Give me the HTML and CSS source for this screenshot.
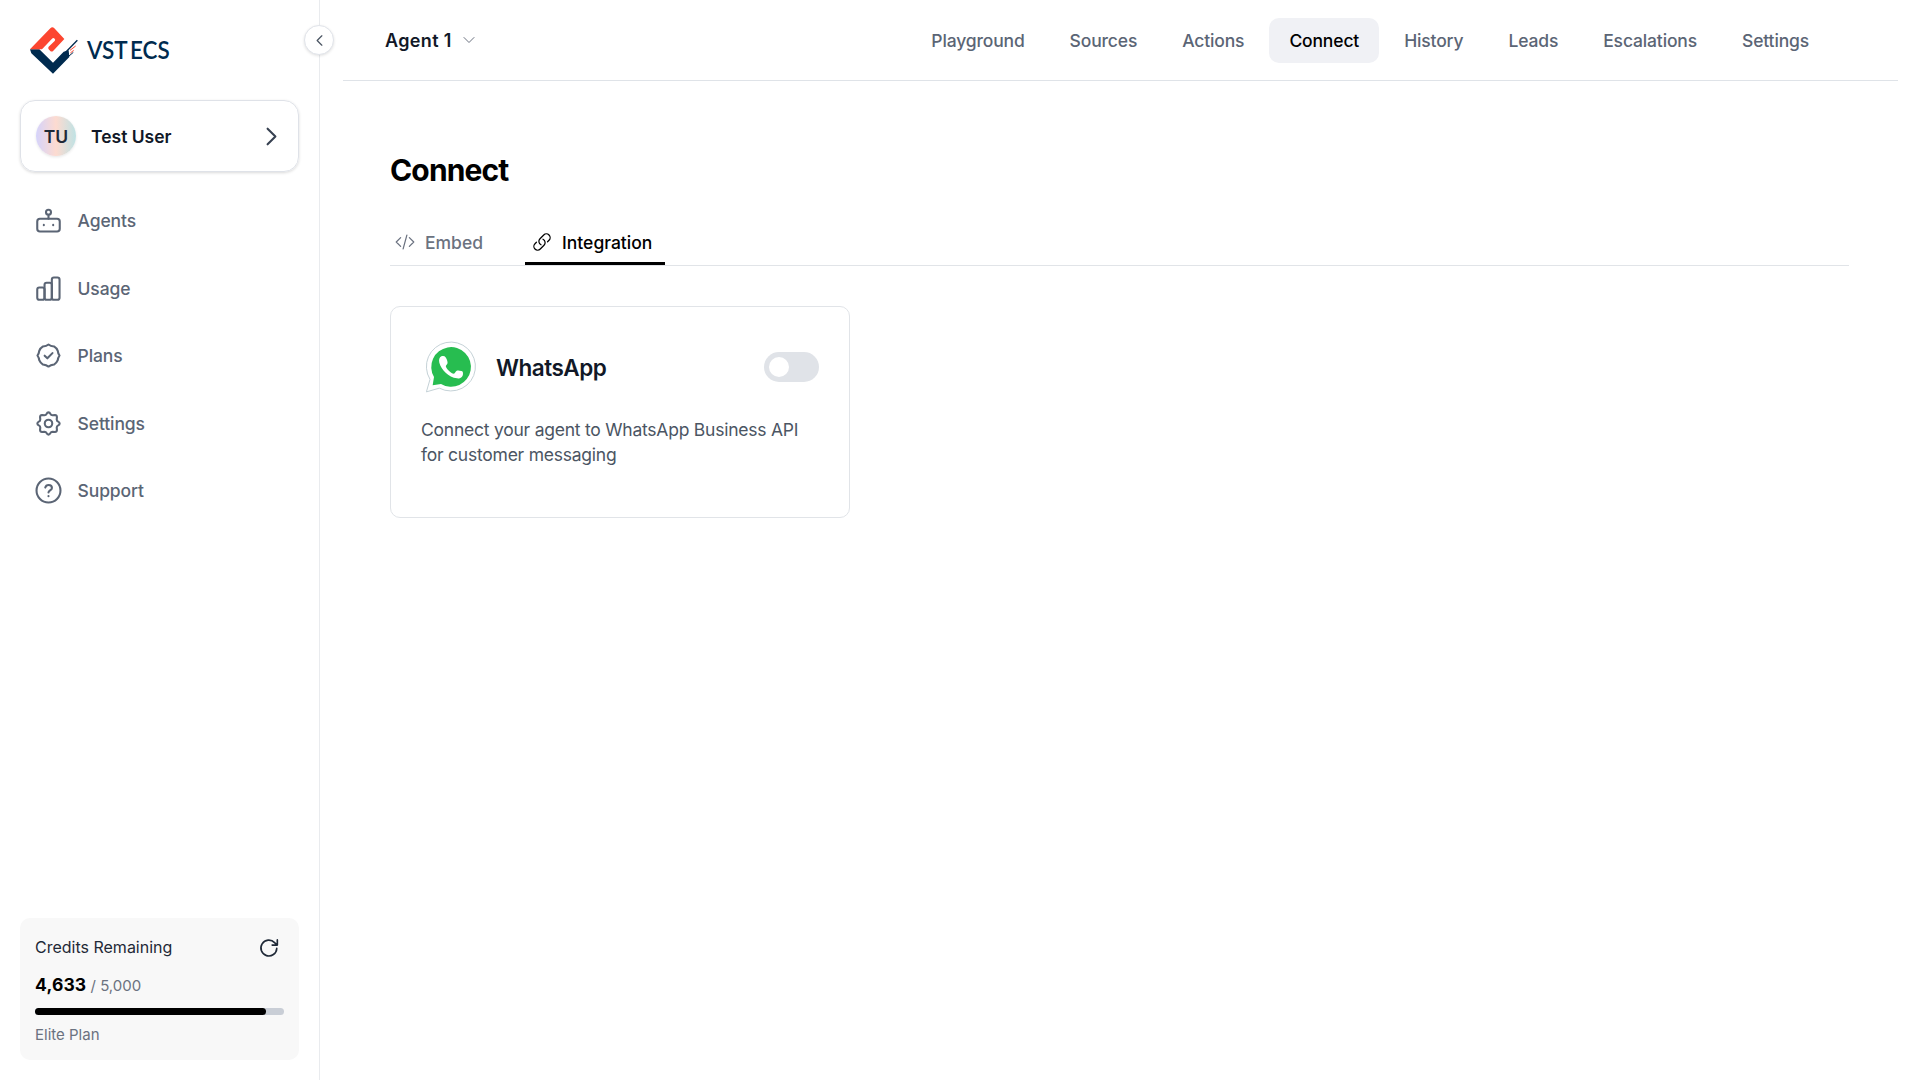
FILE: index.html
```html
<!DOCTYPE html>
<html lang="en">
<head>
<meta charset="utf-8">
<meta name="viewport" content="width=device-width, initial-scale=1">
<title>Agent 1 - Connect</title>
<link rel="stylesheet" href="styles.css">
</head>
<body>
<aside class="sidebar">
    <svg class="logo" viewBox="0 0 480 210" role="img" aria-label="VST ECS">
        <path fill="#002b4f" d="M30 103l4 12 65 61 49-50-2-20-15 4-32 33-41-40z"/>
        <path fill="#fc4630" d="M30 103 91 40q6-6 12 0l30 32-33 35q-5 5-9 1l-5-5q-3-4 0-8l18-17q3-4 0-7-4-4-8 0l-30 32z"/>
        <path stroke="#002b4f" stroke-width="4" d="M134 115 172 76"/>
        <path stroke="#fc4630" stroke-width="3" d="M150 106 167 93M151 114 161 106"/>
        <path stroke="#002b4f" stroke-width="3" d="M147 123 160 112"/>
        <text x="201" y="133" textLength="122" lengthAdjust="spacingAndGlyphs">VST</text>
        <text x="330" y="133" textLength="119" lengthAdjust="spacingAndGlyphs">ECS</text>
    </svg>
    <button class="collapse"><svg viewBox="0 0 24 24"><path d="M15.75 19.5 8.25 12l7.5-7.5"/></svg></button>
    <div class="user">
        <span class="avatar">TU</span>
        <span class="name">Test User</span>
        <svg viewBox="0 0 24 24"><path d="m8.25 4.5 7.5 7.5-7.5 7.5"/></svg>
    </div>
    <nav class="menu">
        <a><svg viewBox="0 0 24 24"><rect x="1.2" y="10.3" width="21.6" height="12.2" rx="2.6"/><circle cx="12" cy="4" r="2.4"/><path d="M12 6.4v3.9M7.5 16.2v.3M16.5 16.2v.3"/></svg>Agents</a>
        <a><svg viewBox="0 0 24 24"><rect x="1.2" y="11" width="7" height="11.8" rx="2"/><rect x="8.2" y="6.4" width="7" height="16.4" rx="2"/><rect x="15.2" y="1.5" width="7.4" height="21.3" rx="2"/></svg>Usage</a>
        <a><svg viewBox="0 0 24 24"><path d="M12 1.4q2 1.5 5.3 1.9 2.5 1.5 3.6 4.2.2 2.4 1.7 4.5-1.5 2.1-1.7 4.5-1.1 2.7-3.6 4.2-3.3.4-5.3 1.9-2-1.5-5.3-1.9-2.5-1.5-3.6-4.2-.2-2.4-1.7-4.5 1.5-2.1 1.7-4.5 1.1-2.7 3.6-4.2 3.3-.4 5.3-1.9zM8.3 12.2l2.6 2.5 4.9-5"/></svg>Plans</a>
        <a><svg viewBox="0 0 24 24"><circle cx="12" cy="12" r="3.6"/><path d="M12 1.3Q13.2 1.3 13.8 2.7 14.4 4.1 15.9 4.1L18.2 3.9Q20 4 20.1 5.8L19.9 8.1Q19.9 9.6 21.3 10.2 22.7 10.8 22.7 12 22.7 13.2 21.3 13.8 19.9 14.4 19.9 15.9L20.1 18.2Q20 20 18.2 20.1L15.9 19.9Q14.4 19.9 13.8 21.3 13.2 22.7 12 22.7 10.8 22.7 10.2 21.3 9.6 19.9 8.1 19.9L5.8 20.1Q4 20 3.9 18.2L4.1 15.9Q4.1 14.4 2.7 13.8 1.3 13.2 1.3 12 1.3 10.8 2.7 10.2 4.1 9.6 4.1 8.1L3.9 5.8Q4 4 5.8 3.9L8.1 4.1Q9.6 4.1 10.2 2.7 10.8 1.3 12 1.3z"/></svg>Settings</a>
        <a><svg class="big" viewBox="0 0 24 24"><circle cx="12" cy="12" r="11.5"/><path d="M8.9 9.2c.4-1.6 1.6-2.5 3.2-2.5 1.9 0 3.2 1.2 3.2 2.8 0 2.3-3.3 2.5-3.3 4.4M12 17.2v.2"/></svg>Support</a>
    </nav>
    <div class="credits">
        <div class="credits-title">Credits Remaining
            <svg viewBox="0 0 24 24"><path d="M21.3 12.5a9.5 9.5 0 1 1-2.6-7l2.8 2.7M22 2.3v6.2h-6.2"/></svg>
        </div>
        <div class="amount"><strong>4,633</strong> / 5,000</div>
        <div class="bar"><div style="width: 92.66%"></div></div>
        <div class="plan">Elite Plan</div>
    </div>
</aside>
<main>
    <header>
        <div class="agent">Agent 1 <svg viewBox="0 0 24 24"><path d="m19.5 8.25-7.5 7.5-7.5-7.5"/></svg></div>
        <nav class="topnav">
            <a>Playground</a>
            <a>Sources</a>
            <a>Actions</a>
            <a class="active">Connect</a>
            <a>History</a>
            <a>Leads</a>
            <a>Escalations</a>
            <a>Settings</a>
        </nav>
    </header>
    <section class="content">
        <h1>Connect</h1>
        <div class="tabs">
            <a><svg viewBox="0 0 24 24"><path d="M17.25 6.75 22.5 12l-5.25 5.25m-10.5 0L1.5 12l5.25-5.25m7.5-3-4.5 16.5"/></svg>Embed</a>
            <a class="active"><svg viewBox="0 0 24 24"><path d="M13.19 8.688a4.5 4.5 0 0 1 1.242 7.244l-4.5 4.5a4.5 4.5 0 0 1-6.364-6.364l1.757-1.757m13.35-.622 1.757-1.757a4.5 4.5 0 0 0-6.364-6.364l-4.5 4.5a4.5 4.5 0 0 0 1.242 7.244"/></svg>Integration</a>
        </div>
        <div class="card">
            <div class="card-head">
                <svg class="whatsapp" viewBox="0 0 150 150">
                    <path fill="#fff" stroke="#c5d2d7" stroke-width="3" d="M1.5 148.5 12 112A73.5 73.5 0 1 1 41 139z"/>
                    <path fill="#27bd50" d="M20 130 24 105A59.5 59.5 0 1 1 45 126z"/>
                    <path fill="#fff" d="M46 43c-6 3-8 10-6 19 6 21 27 43 53 47 10 1 18-4 18-14 0-5-1-7-5-8-10-3-14-2-17 2l-3 5c-2 2-5 2-8 0-7-5-14-11-18-19-1-3 0-5 2-7 4-4 3-7 1-14-3-8-6-14-17-11z"/>
                </svg>
                <h2>WhatsApp</h2>
                <span class="toggle"></span>
            </div>
            <p>Connect your agent to WhatsApp Business API for customer messaging</p>
        </div>
    </section>
</main>
</body>
</html>
```

FILE: styles.css
```css
* {
    box-sizing: border-box;
}
body {
    margin: 0;
    height: 100vh;
    display: flex;
    background: #fff;
    color: #111827;
    font-family: Inter, "Liberation Sans", sans-serif;
    font-size: 17.5px;
    line-height: 25px;
}
svg {
    fill: none;
    stroke: currentColor;
    stroke-width: 1.5;
    stroke-linecap: round;
    stroke-linejoin: round;
    flex-shrink: 0;
}
.sidebar {
    width: 320px;
    flex-shrink: 0;
    position: relative;
    display: flex;
    flex-direction: column;
    padding: 15px 20px 20px;
    border-right: 1px solid #e9ebee;
}
.logo {
    width: 160px;
    height: 70px;
    stroke: none;
    stroke-linecap: butt;
}
.logo text {
    font-family: Lato, sans-serif;
    font-size: 77px;
    font-weight: 600;
    fill: #002b4f;
}
.collapse {
    position: absolute;
    top: 25px;
    right: -15px;
    width: 30px;
    height: 30px;
    padding: 0;
    display: flex;
    align-items: center;
    justify-content: center;
    border: 1px solid #e1e4ea;
    border-radius: 50%;
    background: #fff;
    color: #4b5563;
    box-shadow: 0 1px 3px rgba(0,0,0,0.12);
}
.collapse svg {
    width: 15px;
    stroke-width: 2;
}
.user {
    height: 72px;
    margin-top: 15px;
    padding: 0 14px 0 15px;
    display: flex;
    align-items: center;
    border: 1px solid #dfe2e8;
    border-radius: 15px;
    box-shadow: 0 1px 3px rgba(0,0,0,0.15);
}
.user .name {
    flex: 1;
    margin-left: 15px;
    font-weight: 600;
}
.user svg {
    width: 25px;
    color: #374151;
    stroke-width: 2;
}
.avatar {
    width: 40px;
    height: 40px;
    border-radius: 50%;
    background: linear-gradient(90deg, #d5d3fb, #fddbd0 50%, #bfe2e4);
    color: #1f2937;
    font-weight: 600;
    line-height: 41px;
    text-align: center;
    box-shadow: 0 1px 3px rgba(0,0,0,0.1);
}
.menu {
    margin-top: 15px;
}
.menu a {
    height: 67.5px;
    padding-left: 16px;
    display: flex;
    align-items: center;
    gap: 16.5px;
    color: #5b6575;
    font-weight: 500;
    letter-spacing: -0.1px;
}
.menu svg {
    width: 25px;
    stroke-width: 2;
}
.menu .big {
    overflow: visible;
}
.credits {
    height: 142px;
    margin-top: auto;
    padding: 17px 15px 0;
    border-radius: 10px;
    background: #f8f8f8;
    color: #1f2937;
}
.credits-title {
    display: flex;
    justify-content: space-between;
    align-items: center;
    font-size: 16px;
}
.credits-title svg {
    width: 20px;
    margin-right: 5px;
    stroke-width: 2;
}
.amount {
    margin-top: 12px;
    font-size: 15px;
    color: #6b7280;
}
.amount strong {
    font-size: 17.5px;
    font-weight: 700;
    letter-spacing: 0.15px;
    color: #000;
}
.bar {
    height: 7px;
    margin-top: 10px;
    border-radius: 4px;
    background: #c9ced6;
}
.bar div {
    height: 100%;
    border-radius: 4px;
    background: #000;
}
.plan {
    margin-top: 7px;
    font-size: 15px;
    color: #6b7280;
}
main {
    flex: 1;
    padding: 0 22px 0 23px;
}
header {
    height: 81px;
    padding: 0 69px 0 42px;
    display: flex;
    justify-content: space-between;
    align-items: center;
    border-bottom: 1px solid #dfe3e8;
}
.agent {
    display: flex;
    align-items: center;
    gap: 9.5px;
    font-size: 18px;
    font-weight: 600;
    letter-spacing: 0.35px;
}
.agent svg {
    width: 16px;
    color: #6b7280;
}
.topnav {
    display: flex;
    gap: 5px;
}
.topnav a {
    padding: 10px 20px;
    border-radius: 10px;
    color: #5b6575;
    font-weight: 500;
    letter-spacing: -0.15px;
}
.topnav .active {
    background: #f0f1f5;
    color: #000;
}
.content {
    padding: 69px 49px 0 47px;
}
h1 {
    margin: 0;
    font-size: 30px;
    line-height: 40px;
    font-weight: 700;
    letter-spacing: -0.85px;
    color: #000;
}
.tabs {
    height: 45px;
    margin-top: 31px;
    display: flex;
    gap: 30px;
    border-bottom: 1px solid #e1e4e8;
}
.tabs a {
    display: flex;
    align-items: center;
    gap: 10px;
    padding: 0 12px 2px 5px;
    color: #6b7280;
    font-weight: 500;
}
.tabs .active {
    padding: 1px 13px 0 7px;
    border-bottom: 3px solid #000;
    color: #000;
}
.tabs svg {
    width: 20px;
}
.card {
    width: 460px;
    height: 212px;
    margin-top: 40px;
    padding: 30px;
    border: 1px solid #e1e4e8;
    border-radius: 10px;
}
.card-head {
    display: flex;
    align-items: center;
    height: 60px;
}
.whatsapp {
    width: 50px;
    height: 50px;
    margin-left: 5px;
    stroke: none;
    overflow: visible;
}
h2 {
    flex: 1;
    margin: 0 0 0 20px;
    font-size: 22.5px;
    font-weight: 600;
    letter-spacing: -0.5px;
}
.toggle {
    width: 55px;
    height: 30px;
    padding: 5px;
    border-radius: 15px;
    background: #e0e3e8;
}
.toggle:before {
    content: "";
    display: block;
    width: 20px;
    height: 20px;
    border-radius: 50%;
    background: #fff;
}
.card p {
    margin: 20px 0 0;
    color: #4b5563;
    letter-spacing: -0.23px;
}
```
